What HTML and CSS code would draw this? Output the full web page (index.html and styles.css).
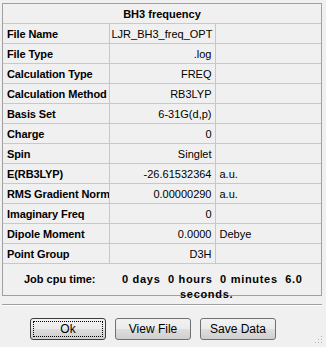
FILE: index.html
```html
<!DOCTYPE html>
<html lang="en">
<head>
  <meta charset="UTF-8">
  <title>BH3 frequency</title>
  <link rel="stylesheet" href="styles.css">
</head>
<body>
  <div class="panel">
    <table class="summary">
      <tr><th colspan="3" class="title">BH3 frequency</th></tr>
      <tr><td class="label">File Name</td><td class="value">LJR_BH3_freq_OPT</td><td class="unit"></td></tr>
      <tr><td class="label">File Type</td><td class="value">.log</td><td class="unit"></td></tr>
      <tr><td class="label">Calculation Type</td><td class="value">FREQ</td><td class="unit"></td></tr>
      <tr><td class="label">Calculation Method</td><td class="value">RB3LYP</td><td class="unit"></td></tr>
      <tr><td class="label">Basis Set</td><td class="value">6-31G(d,p)</td><td class="unit"></td></tr>
      <tr><td class="label">Charge</td><td class="value">0</td><td class="unit"></td></tr>
      <tr><td class="label">Spin</td><td class="value">Singlet</td><td class="unit"></td></tr>
      <tr><td class="label">E(RB3LYP)</td><td class="value">-26.61532364</td><td class="unit">a.u.</td></tr>
      <tr><td class="label">RMS Gradient Norm</td><td class="value">0.00000290</td><td class="unit">a.u.</td></tr>
      <tr><td class="label">Imaginary Freq</td><td class="value">0</td><td class="unit"></td></tr>
      <tr><td class="label">Dipole Moment</td><td class="value">0.0000</td><td class="unit">Debye</td></tr>
      <tr><td class="label">Point Group</td><td class="value">D3H</td><td class="unit"></td></tr>
    </table>
    <div class="cpu">
      <div class="cpu-label">Job cpu time:</div>
      <div class="cpu-value">0 days&nbsp;&nbsp;0 hours&nbsp;&nbsp;0 minutes&nbsp;&nbsp;6.0<br><span class="cpu-tail">seconds.</span></div>
    </div>
  </div>

  <div class="separator"></div>

  <div class="buttons">
    <button class="btn focused"><span>Ok</span></button>
    <button class="btn"><span>View File</span></button>
    <button class="btn"><span>Save Data</span></button>
  </div>

  <div class="grip">
    <svg width="8" height="8" viewBox="0 0 8 8">
      <rect x="6" y="0" width="1" height="1" fill="#b8b8b8"/>
      <rect x="3" y="3" width="1" height="1" fill="#b8b8b8"/>
      <rect x="6" y="3" width="1" height="1" fill="#b8b8b8"/>
      <rect x="0" y="6" width="1" height="1" fill="#b8b8b8"/>
      <rect x="3" y="6" width="1" height="1" fill="#b8b8b8"/>
      <rect x="6" y="6" width="1" height="1" fill="#b8b8b8"/>
    </svg>
  </div>
</body>
</html>
```

FILE: styles.css
```css
body {
  margin: 0;
  width: 326px;
  height: 347px;
  background-color: #f0f0f0;
  font-family: "Liberation Sans", Arial, sans-serif;
  font-size: 11px;
  color: #000;
  position: relative;
  overflow: hidden;
}

.panel {
  margin: 3px 4px 0 2px;
  border: 1px solid #a0a0a0;
  height: 293px;
  box-sizing: border-box;
}

.summary {
  width: 100%;
  border-collapse: collapse;
  table-layout: fixed;
}

.summary th,
.summary td {
  height: 19px;
  padding: 0 4px;
  border-bottom: 1px solid #c8c8c8;
  white-space: nowrap;
  overflow: hidden;
}

.title {
  font-weight: bold;
  text-align: center;
}

.summary td.label {
  width: 131px;
  padding: 0 0 0 4px;
  font-weight: bold;
  letter-spacing: -0.1px;
  border-right: 1px solid #c8c8c8;
}

.summary td.value {
  width: 116px;
  padding: 0 3px 0 2px;
  text-align: right;
  border-right: 1px solid #c8c8c8;
}

.unit {
  text-align: left;
}

.cpu {
  display: flex;
  padding-top: 8px;
  font-weight: bold;
  line-height: 15px;
}

.cpu-label {
  width: 98px;
  padding-left: 21px;
}

.cpu-value {
  white-space: nowrap;
  letter-spacing: 0.7px;
}

.cpu-tail {
  padding-left: 58px;
}

.separator {
  margin: 8px 4px 0 2px;
  border-top: 1px solid #a0a0a0;
  border-bottom: 1px solid #ffffff;
}

.buttons {
  display: flex;
  gap: 9px;
  padding: 12px 0 0 30px;
}

.btn {
  width: 76px;
  height: 22px;
  padding: 2px;
  border: 1px solid #707070;
  border-radius: 3px;
  background: linear-gradient(#f2f2f2 0%, #ebebeb 50%, #dddddd 51%, #cfcfcf 100%);
  font-family: "Liberation Sans", Arial, sans-serif;
  font-size: 12px;
  color: #000;
}

.btn span {
  display: flex;
  align-items: center;
  justify-content: center;
  height: 100%;
  box-sizing: border-box;
  border: 1px dotted transparent;
}

.focused {
  border-color: #3c3c3c;
}

.focused span {
  border-color: #000;
}

.grip {
  position: absolute;
  right: 3px;
  bottom: 3px;
  line-height: 0;
}
```
